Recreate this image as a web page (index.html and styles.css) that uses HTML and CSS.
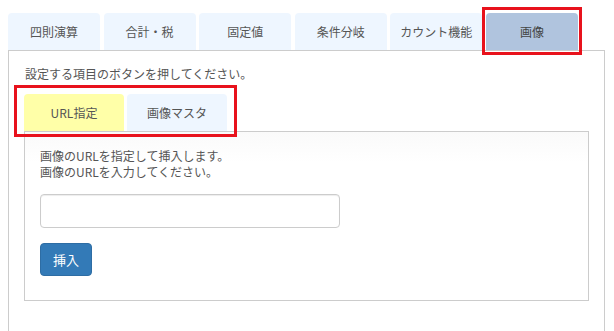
FILE: index.html
```html
<!DOCTYPE html>
<html lang="ja">
<head>
  <meta charset="UTF-8">
  <meta name="viewport" content="width=device-width, initial-scale=1.0">
  <title>画像</title>
  <link rel="stylesheet" href="styles.css">
</head>
<body>
  <section class="wrap">
    <ul class="tabs">
      <li class="tab">四則演算</li>
      <li class="tab">合計・税</li>
      <li class="tab">固定値</li>
      <li class="tab">条件分岐</li>
      <li class="tab">カウント機能</li>
      <li class="tab active">画像<span class="mark mark-tab"></span></li>
    </ul>
    <div class="panel">
      <p class="lead">設定する項目のボタンを押してください。</p>
      <div class="subtabs">
        <ul class="subtab-group">
          <li class="subtab selected">URL指定</li>
          <li class="subtab">画像マスタ</li>
          <span class="mark mark-sub"></span>
        </ul>
      </div>
      <div class="subpanel">
        <p class="note">画像のURLを指定して挿入します。<br>画像のURLを入力してください。</p>
        <input class="url-input" type="text">
        <button class="insert">挿入</button>
      </div>
    </div>
  </section>
</body>
</html>
```

FILE: styles.css
```css
*{
  padding: 0;
  margin: 0;
  box-sizing: border-box;
}
body{
  font-family: "Noto Sans CJK JP", "Noto Sans", sans-serif;
  font-size: 12px;
  color: #555;
  background: #fff;
}
ul{
  list-style: none;
}
.wrap{
  padding: 13px 9px 0 8px;
}
.tabs{
  display: flex;
  gap: 3.6px;
}
.tab{
  position: relative;
  width: 92px;
  height: 37px;
  display: grid;
  place-items: center;
  background: #eef6ff;
  border-radius: 4px 4px 0 0;
  color: #555;
}
.tab.active{
  background: #b0c4de;
  color: #444;
}
.mark{
  position: absolute;
  border: 3px solid #e8121c;
}
.mark-tab{
  top: -6px;
  left: -4px;
  right: -4px;
  bottom: -5px;
}
.panel{
  border: 1px solid #ccc;
  border-bottom: none;
  padding: 14px 15px 40px 15px;
}
.lead{
  line-height: 18px;
  margin-left: 1px;
}
.subtabs{
  display: flex;
  margin-top: 11px;
}
.subtab-group{
  position: relative;
  display: flex;
  gap: 3px;
}
.subtab{
  width: 100px;
  height: 37px;
  display: grid;
  place-items: center;
  background: #eef6ff;
  border-radius: 4px 4px 0 0;
}
.subtab.selected{
  background: #ffffa8;
}
.mark-sub{
  top: -9px;
  left: -10px;
  right: -10px;
  bottom: -6px;
}
.subpanel{
  border: 1px solid #ccc;
  padding: 16px 15px 24px 15px;
  background: linear-gradient(#fafafa, #fff 30px);
}
.note{
  line-height: 16px;
}
.url-input{
  display: block;
  width: 300px;
  height: 34px;
  margin-top: 14px;
  border: 1px solid #ccc;
  border-radius: 4px;
  box-shadow: inset 0 1px 1px rgba(0,0,0,.075);
  padding: 6px 12px;
  font: inherit;
}
.insert{
  display: block;
  margin-top: 15px;
  width: 52px;
  height: 33px;
  background: #337ab7;
  border: 1px solid #2e6da4;
  border-radius: 4px;
  color: #fff;
  font-family: inherit;
  font-size: 13px;
  cursor: pointer;
}
```
